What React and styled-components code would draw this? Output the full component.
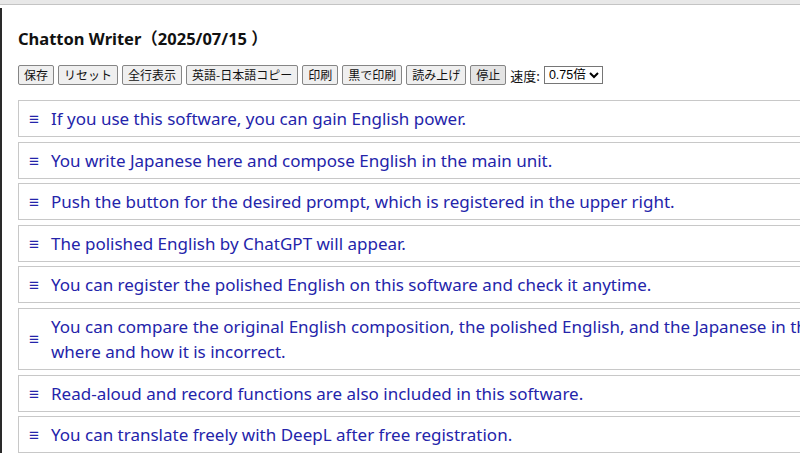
import React, { useState } from 'react';
import styled, { createGlobalStyle } from 'styled-components';

const GlobalStyle = createGlobalStyle`
  html, body {
    margin: 0;
    padding: 0;
    background: #fff;
    overflow: hidden;
  }
  body {
    font-family: "Noto Sans", "Noto Sans CJK JP", sans-serif;
  }
`;

const sentences = [
  'If you use this software, you can gain English power.',
  'You write Japanese here and compose English in the main unit.',
  'Push the button for the desired prompt, which is registered in the upper right.',
  'The polished English by ChatGPT will appear.',
  'You can register the polished English on this software and check it anytime.',
  'You can compare the original English composition, the polished English, and the Japanese in the same screen, so that you can see where and how it is incorrect.',
  'Read-aloud and record functions are also included in this software.',
  'You can translate freely with DeepL after free registration.',
];

const buttons = ['保存', 'リセット', '全行表示', '英語-日本語コピー', '印刷', '黒で印刷', '読み上げ', '停止'];

function App() {
  const [speed, setSpeed] = useState('0.75');
  return (
    <>
      <GlobalStyle />
      <TopBand />
      <Page>
        <Title>Chatton Writer（2025/07/15 ）</Title>
        <Toolbar>
          {buttons.map((b) => (
            <ToolButton key={b} $active={b === '停止'}>{b}</ToolButton>
          ))}
          <SpeedLabel>速度:</SpeedLabel>
          <SpeedSelect value={speed} onChange={(e) => setSpeed(e.target.value)}>
            <option value="0.5">0.5倍</option>
            <option value="0.75">0.75倍</option>
            <option value="1">1倍</option>
          </SpeedSelect>
        </Toolbar>
        <List>
          {sentences.map((s, i) => (
            <Row key={i}>
              <Handle>≡</Handle>
              <Text>{s}</Text>
            </Row>
          ))}
        </List>
      </Page>
    </>
  );
}

export default App;

// styled-components
const TopBand = styled.div`
  height: 4px;
  background: #e8e8e8;
  border-bottom: 1px solid #c4c4c4;
`;

const Page = styled.div`
  border-left: 2px solid #2a2a2a;
  margin-top: 3px;
  padding: 0 0 0 16px;
  height: 445px;
`;

const Title = styled.h1`
  margin: 0;
  padding-top: 19px;
  font-family: "Noto Sans", "Noto Sans CJK JP", sans-serif;
  font-size: 16.5px;
  font-weight: 700;
  line-height: 24px;
  color: #111;
`;

const Toolbar = styled.div`
  display: flex;
  align-items: center;
  gap: 4px;
  margin-top: 14px;
  height: 20px;
`;

const ToolButton = styled.button`
  height: 20px;
  padding: 0 5px;
  font-family: "Noto Sans CJK JP", sans-serif;
  font-size: 12px;
  line-height: 16px;
  color: #111;
  background: ${(p) => (p.$active ? '#e4e4e4' : '#efefef')};
  border: 1px solid #858585;
  border-radius: 2px;
  cursor: pointer;
`;

const SpeedLabel = styled.span`
  font-family: "Noto Sans CJK JP", sans-serif;
  font-size: 13px;
  color: #111;
`;

const SpeedSelect = styled.select`
  height: 18px;
  margin-left: 0;
  font-family: "Liberation Sans", "Noto Sans CJK JP", sans-serif;
  font-size: 12.5px;
  border: 1px solid #767676;
  border-radius: 0;
  background: #fff;
  padding: 0;
`;

const List = styled.div`
  margin-top: 15px;
  width: 1110px;
`;

const Row = styled.div`
  display: flex;
  align-items: center;
  gap: 11px;
  padding: 5px 9px;
  margin-bottom: 4.6px;
  border: 1px solid #c8c8c8;
  color: #2424aa;
  font-family: "Noto Sans", sans-serif;
  font-size: 17px;
  line-height: 25px;
`;

const Handle = styled.span`
  width: 12px;
  flex: none;
  font-size: 17px;
  text-align: center;
`;

const Text = styled.span`
  flex: 1;
`;
